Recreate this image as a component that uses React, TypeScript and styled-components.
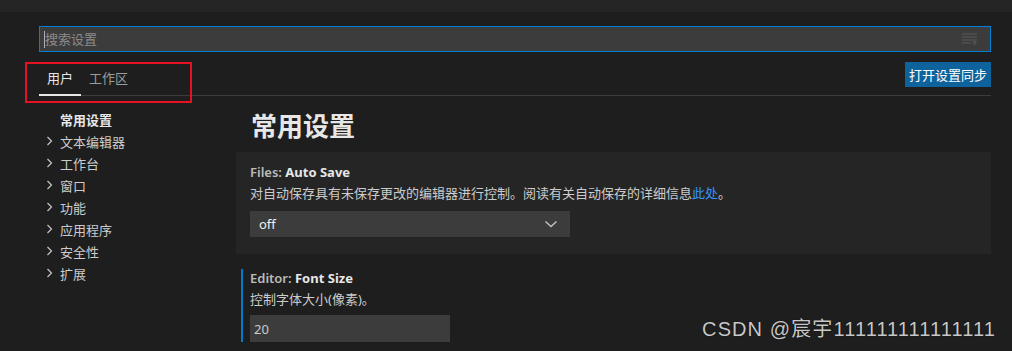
import React from 'react'
import styled, { createGlobalStyle } from 'styled-components'

const GlobalStyle = createGlobalStyle`
  html, body {
    margin: 0;
    padding: 0;
    background: #1e1e1e;
    font-family: "Segoe UI", "Noto Sans", "Noto Sans CJK SC", sans-serif;
    font-size: 13px;
    color: #cccccc;
  }
`

const tocItems = ['文本编辑器', '工作台', '窗口', '功能', '应用程序', '安全性', '扩展']

export default function App() {
  return (
    <Page>
      <GlobalStyle />
      <TitleStrip />
      <Editor>
        <SearchBox>
          <Caret />
          <Placeholder>搜索设置</Placeholder>
          <FilterIcon width="16" height="12" viewBox="0 0 16 12">
            <path d="M0 1h15M0 4h15M0 7h15M0 10h9" stroke="#5a5a5a" strokeWidth="1" fill="none" />
            <path d="M11 8.5l3 3M14 8.5l-3 3" stroke="#5a5a5a" strokeWidth="1.2" fill="none" />
          </FilterIcon>
        </SearchBox>

        <TabsRow>
          <Tabs>
            <Tab active>用户</Tab>
            <Tab>工作区</Tab>
          </Tabs>
          <SyncButton>打开设置同步</SyncButton>
          <Marker />
        </TabsRow>

        <Body>
          <Toc>
            <TocItem bold>常用设置</TocItem>
            {tocItems.map((item) => (
              <TocItem key={item}>
                <Chevron width="8" height="10" viewBox="0 0 8 10">
                  <path d="M1.5 1l4 4-4 4" stroke="#c5c5c5" strokeWidth="1.2" fill="none" />
                </Chevron>
                {item}
              </TocItem>
            ))}
          </Toc>

          <Settings>
            <Heading>常用设置</Heading>
            <SettingCard highlighted>
              <SettingTitle>
                <span>Files: </span><b>Auto Save</b>
              </SettingTitle>
              <Description>
                对自动保存具有未保存更改的编辑器进行控制。阅读有关自动保存的详细信息<Link>此处</Link>。
              </Description>
              <Select>
                <span>off</span>
                <svg width="14" height="10" viewBox="0 0 14 10">
                  <path d="M1.5 2.5l5.5 5 5.5-5" stroke="#c5c5c5" strokeWidth="1.3" fill="none" />
                </svg>
              </Select>
            </SettingCard>
            <SettingCard focused>
              <SettingTitle>
                <span>Editor: </span><b>Font Size</b>
              </SettingTitle>
              <Description>控制字体大小(像素)。</Description>
              <NumberInput>20</NumberInput>
            </SettingCard>
          </Settings>
        </Body>
      </Editor>
      <Watermark>CSDN @宸宇111111111111111</Watermark>
    </Page>
  )
}

const Page = styled.div`
  position: relative;
  width: 1012px;
  height: 351px;
  overflow: hidden;
  background: #1e1e1e;
`

const TitleStrip = styled.div`
  height: 12px;
  background: #252526;
`

const Editor = styled.div`
  width: 952px;
  margin-left: 39px;
  padding-top: 14px;
`

const SearchBox = styled.div`
  height: 24px;
  display: flex;
  align-items: center;
  background: #3c3c3c;
  border: 1px solid #007fd4;
  padding: 0 12px 0 4px;
`

const Caret = styled.div`
  width: 1px;
  height: 17px;
  background: #aeafad;
`

const Placeholder = styled.span`
  flex: 1;
  color: #8b8b8b;
  font-size: 13px;
  margin-top: -2px;
`

const FilterIcon = styled.svg`
  display: block;
`

const TabsRow = styled.div`
  position: relative;
  margin-top: 10px;
  height: 33px;
  display: flex;
  justify-content: space-between;
  align-items: flex-start;
  border-bottom: 1px solid #3c3c3c;
`

const Tabs = styled.div`
  display: flex;
  height: 100%;
`

const Tab = styled.div<{ active?: boolean }>`
  display: flex;
  align-items: center;
  padding: 0 8px;
  height: 34px;
  box-sizing: border-box;
  margin-bottom: -2px;
  padding-bottom: 2px;
  font-size: 13px;
  color: ${(p) => (p.active ? '#e7e7e7' : '#9d9d9d')};
  border-bottom: 2px solid ${(p) => (p.active ? '#e7e7e7' : 'transparent')};
`

const SyncButton = styled.button`
  height: 25px;
  padding: 0 4px;
  border: 0;
  background: #0e639c;
  color: #ffffff;
  font-family: inherit;
  font-size: 13px;
`

const Marker = styled.div`
  position: absolute;
  left: -14px;
  top: 0;
  width: 163px;
  height: 37px;
  border: 2px solid #e81123;
`

const Body = styled.div`
  display: flex;
  padding-top: 12px;
`

const Toc = styled.div`
  width: 197px;
  flex-shrink: 0;
`

const TocItem = styled.div<{ bold?: boolean }>`
  height: 22px;
  display: flex;
  align-items: center;
  padding-left: ${(p) => (p.bold ? '21px' : '7px')};
  font-size: 13px;
  font-weight: ${(p) => (p.bold ? 700 : 400)};
  color: ${(p) => (p.bold ? '#e7e7e7' : '#cccccc')};
`

const Chevron = styled.svg`
  display: block;
  margin-right: 6px;
`

const Settings = styled.div`
  flex: 1;
`

const Heading = styled.div`
  height: 44px;
  padding-left: 15px;
  font-size: 26px;
  font-weight: 700;
  color: #e7e7e7;
  line-height: 36px;
`

const SettingCard = styled.div<{ highlighted?: boolean; focused?: boolean }>`
  background: ${(p) => (p.highlighted ? '#252526' : 'transparent')};
  padding: 11px 14px 17px;
  ${(p) =>
    p.focused &&
    `
    margin: 15px 0 0 5px;
    padding: 0 14px 0 7px;
    border-left: 2px solid #007acc;
  `}
`

const SettingTitle = styled.div`
  height: 18px;
  line-height: 18px;
  font-size: 13px;
  color: #bbbbbb;
  span { font-weight: 600; }
  b { color: #e7e7e7; font-weight: 700; }
`

const Description = styled.div`
  margin-top: 2px;
  height: 20px;
  line-height: 20px;
  font-size: 13px;
  color: #cccccc;
`

const Link = styled.span`
  color: #3794ff;
`

const Select = styled.div`
  margin-top: 8px;
  width: 320px;
  height: 26px;
  box-sizing: border-box;
  padding: 0 12px 0 9px;
  display: flex;
  justify-content: space-between;
  align-items: center;
  background: #3c3c3c;
  color: #f0f0f0;
  font-size: 13px;
`

const NumberInput = styled.div`
  margin-top: 6px;
  width: 200px;
  height: 27px;
  box-sizing: border-box;
  padding-left: 4px;
  display: flex;
  align-items: center;
  background: #3c3c3c;
  color: #cccccc;
  font-size: 13px;
`

const Watermark = styled.div`
  position: absolute;
  right: 16px;
  bottom: 9px;
  font-family: "Liberation Sans", "Noto Sans CJK SC", sans-serif;
  font-size: 20px;
  color: #c8c8c8;
  text-shadow: 0 0 1px #000;
  letter-spacing: 1.1px;
`
